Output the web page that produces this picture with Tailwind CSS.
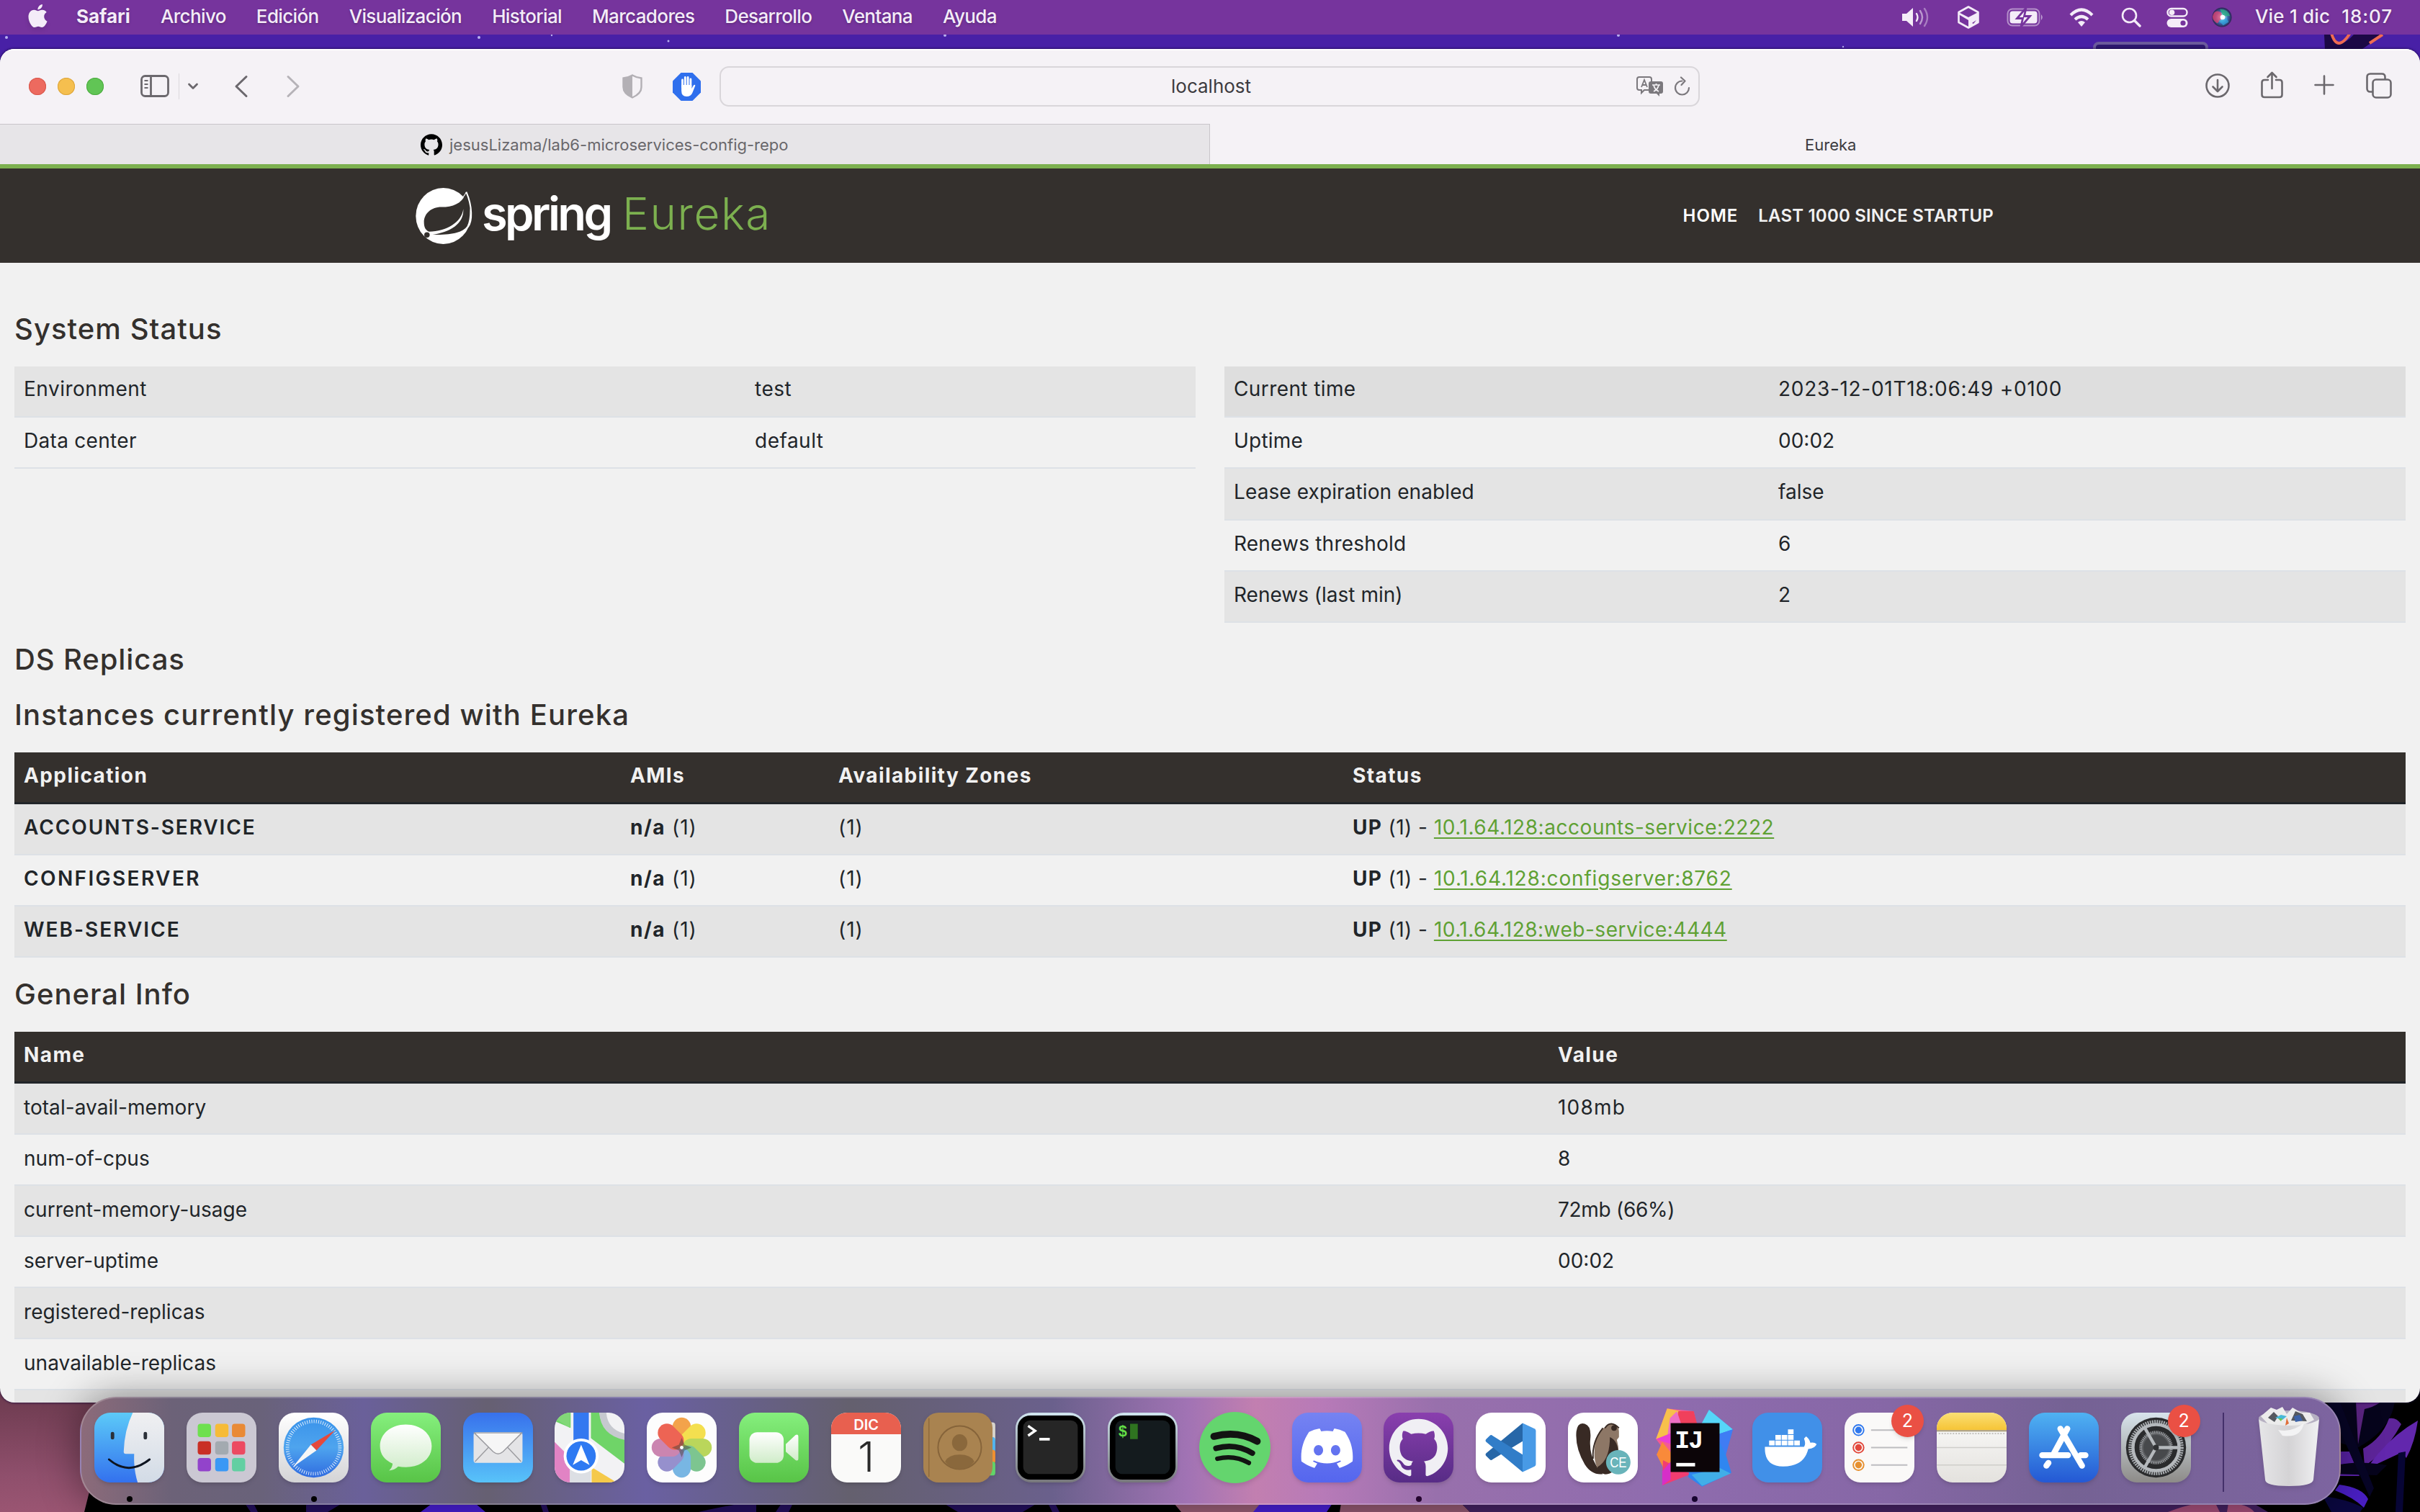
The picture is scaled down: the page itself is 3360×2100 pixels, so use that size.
<!DOCTYPE html>
<html lang="es">
<head>
<meta charset="utf-8">
<title>Eureka</title>
<script src="https://cdn.jsdelivr.net/npm/@tailwindcss/browser@4"></script>
</head>
<body class="relative flex h-[2100px] w-[3360px] flex-col overflow-hidden bg-black font-['Inter',sans-serif] text-[#212529]">

<!-- Wallpaper -->
<svg class="absolute inset-0 -z-0 h-[2100px] w-[3360px]" viewBox="0 0 3360 2100">
  <defs><linearGradient id="pk" x1="0" y1="0" x2="0" y2="1"><stop offset="0" stop-color="#6b3a4e"/><stop offset=".7" stop-color="#8f4f6c"/><stop offset="1" stop-color="#9a5572"/></linearGradient></defs>
  <rect width="3360" height="1000" fill="#4820a6"/>
  <g fill="#b9b0ef"><circle cx="9" cy="52" r="2"/><circle cx="665" cy="52" r="2"/><circle cx="928" cy="57" r="1.5"/><circle cx="1312" cy="49" r="2"/><circle cx="766" cy="49" r="1.2"/><circle cx="2247" cy="49" r="2"/><circle cx="2559" cy="65" r="1.2"/></g>
  <rect x="2908" y="60" width="156" height="40" rx="6" fill="#2d1870" stroke="#6b5a9c" stroke-width="4"/>
  <path d="M3227 48h82l-32 22h-49z" fill="#1c0846"/><path d="M3240 48q6 24 28 0z" fill="#4820a6"/><path d="M3237 46q8 28 26 0M3308 48l-18 12" stroke="#ef6b52" stroke-width="4" fill="none"/>
  <path d="M0 1930H160L122 2080L117 2100H0z" fill="url(#pk)"/>
  <g fill="#241060"><path d="M340 2088h12l6 12h-10zM425 2088h50l-20 12h-30zM970 2100q60-14 80-12v12zM1085 2088h16l-6 12h-18zM1310 2088h130l-20 12h-90zM1455 2088h10l6 12h-10zM750 2088h8l4 12h-8z"/></g>
  <path d="M600 2088h60l14 12h-90z" fill="#4a1fd8"/>
  <path d="M1630 2088h125l-10 12h-105z" fill="#9c5f78"/><path d="M1750 2088h100l-8 12h-102z" fill="#4a1fd8"/><path d="M1862 2088h167l12 12h-181z" fill="#965a74"/><path d="M2029 2088h1100l20 12H2041z" fill="#462264"/><path d="M3010 2100q40-16 66-12l6 12zM3094 2088q26 0 36 12h-38z" fill="#a8507c"/>
  <g>
    <path d="M3240 1945h85q-4 40-52 66l-35-10z" fill="#06041c"/>
    <path d="M3271 1946h36q-10 8-24 11l-9 49z" fill="#5a2480"/>
    <path d="M3281 2012q26-14 36-42q10-2 17 8q-22 40-51 58z" fill="#5d2499"/>
    <path d="M3286 2040q30-44 71-67q-4 30-16 52l-6-8z" fill="#6227ad"/>
    <path d="M3225 2016h37l14 34h-40z" fill="#5a22a8"/>
    <path d="M3240 2037q26-10 74-2l-14 14-60-2z" fill="#06041c"/>
    <path d="M3248 1945l48 122-6 12-60-134z" fill="#070526"/>
    <path d="M3248 2062q32 4 40 20l-6 12q-14-14-40-24z" fill="#4a1fc4"/>
    <path d="M3225 2078q34 4 56 16l-4 6h-40z" fill="#0a0740"/>
    <path d="M3330 2018l10-2-4 84h-10z" fill="#070535"/>
  </g>
</svg>

<!-- Menu bar -->
<header class="relative flex h-12 shrink-0 items-center bg-[#76349d] pr-[38px] pl-[39px] text-[26px] leading-none tracking-[-0.630px] whitespace-nowrap text-[#f4ecf8]">
  <svg class="mt-[-4px] mr-[40px] h-8 w-[27px] drop-shadow-md" viewBox="2 0 20 24" fill="#f4ecf8"><path d="M12.152 6.896c-.948 0-2.415-1.078-3.96-1.04-2.04.027-3.91 1.183-4.961 3.014-2.117 3.675-.546 9.103 1.519 12.09 1.013 1.454 2.208 3.09 3.792 3.039 1.52-.065 2.09-.987 3.935-.987 1.831 0 2.35.987 3.96.948 1.637-.026 2.676-1.48 3.676-2.948 1.156-1.688 1.636-3.325 1.662-3.415-.039-.013-3.182-1.221-3.22-4.857-.026-3.04 2.48-4.494 2.597-4.559-1.429-2.09-3.623-2.324-4.39-2.376-2-.156-3.675 1.09-4.61 1.09zM15.53 3.83c.843-1.012 1.4-2.427 1.245-3.83-1.207.052-2.662.805-3.532 1.818-.78.896-1.454 2.338-1.273 3.714 1.338.104 2.715-.688 3.559-1.701"/></svg>
  <nav class="flex gap-[42px] pb-0.5 font-medium text-shadow-md">
    <span class="font-bold tracking-normal">Safari</span><span>Archivo</span><span>Edición</span><span>Visualización</span><span>Historial</span><span>Marcadores</span><span>Desarrollo</span><span>Ventana</span><span>Ayuda</span>
  </nav>
  <div class="ml-auto flex items-center">
    <svg class="mr-[39px] h-7 w-[38px]" viewBox="0 0 38 28" fill="#f4ecf8"><path d="M0 9h6l9-8v26l-9-8H0z"/><g fill="none" stroke="#f4ecf8" stroke-width="2.4" stroke-linecap="round"><path d="M20 9q3 5 0 10"/><path d="M25 5q6 9 0 18" opacity=".55"/><path d="M31 2q8 12 0 24" opacity=".4"/></g></svg>
    <svg class="mr-[38px] h-8 w-[30px]" viewBox="0 0 30 32"><path d="M15 1.5L28.5 9v14L15 30.500 1.500 23V9z" fill="none" stroke="#f4ecf8" stroke-width="2.600" stroke-linejoin="round"/><path d="M15 16L28.500 9v14L15 30.500zM1.500 9L15 16l0 4L1.500 12z" fill="#f4ecf8"/><path d="M20 24l6-4-4 5z" fill="#76349d"/></svg>
    <svg class="mr-[35px] h-7 w-[52px]" viewBox="0 0 52 28"><rect x="1.500" y="2.500" width="44" height="23" rx="6.500" fill="none" stroke="#f4ecf8" stroke-opacity=".5" stroke-width="2"/><rect x="4.500" y="5.500" width="38" height="17" rx="4" fill="#f4ecf8"/><path d="M48 10q3.500 4 0 8z" fill="#f4ecf8" opacity=".6"/><path d="M27 1L14.500 15.500h8L20 27 32.500 12.500h-8z" fill="#f4ecf8" stroke="#76349d" stroke-width="2.800"/></svg>
    <svg class="mr-[38px] h-7 w-[34px]" viewBox="0 0 34 28"><g fill="none" stroke="#f4ecf8" stroke-width="4.200"><path d="M2 11Q17-4 32 11"/><path d="M8 17q9-8 18 0"/></g><path d="M12 21q5-4 10 0l-5 6z" fill="#f4ecf8"/></svg>
    <svg class="mr-[35px] h-7 w-7" viewBox="0 0 28 28" fill="none" stroke="#f4ecf8" stroke-width="2.600" stroke-linecap="round"><circle cx="11.500" cy="11.500" r="9.500"/><path d="M18.500 18.500L26 26" stroke-width="3.400"/></svg>
    <svg class="mr-8 h-7 w-[30px]" viewBox="0 0 30 28"><rect x="1.500" y="2" width="27" height="10.500" rx="5.200" fill="none" stroke="#f4ecf8" stroke-width="2.400"/><circle cx="7.500" cy="7.200" r="3.800" fill="#f4ecf8"/><rect x=".5" y="16" width="29" height="12" rx="6" fill="#f4ecf8"/><circle cx="23" cy="22" r="3.600" fill="#76349d"/></svg>
    <svg class="mr-[31px] h-7 w-[30px]" viewBox="0 0 30 30"><defs><radialGradient id="siri"><stop offset="0" stop-color="#fff"/><stop offset=".25" stop-color="#9fe3f5"/><stop offset=".6" stop-color="#3c6bb0"/><stop offset="1" stop-color="#2b2450"/></radialGradient></defs><circle cx="15" cy="15" r="14.500" fill="url(#siri)"/><path d="M1 14Q4 2 14 8l2 8-8 8Q1 20 1 14z" fill="#e8406f" opacity=".75"/><path d="M12 3q12 0 15 10l-10 0z" fill="#2fae84" opacity=".8"/><path d="M10 20l12-4 3 6-8 5z" fill="#31a8e0" opacity=".7"/><circle cx="16" cy="15" r="3.500" fill="#fff"/></svg>
    <span class="pb-0.5 font-medium tracking-[0.200px] text-shadow-md">Vie 1 dic</span><span class="ml-[16px] pb-0.5 font-medium tracking-[0.900px] text-shadow-md">18:07</span>
  </div>
</header>

<!-- Safari window -->
<main class="relative mt-5 flex h-[1880px] shrink-0 flex-col overflow-hidden rounded-[20px] bg-[#f1f1f1] shadow-[0_0_3px_1px_rgba(20,5,60,0.6)]">
  <div class="flex h-[104px] shrink-0 items-center border-t-2 border-white bg-[#f5f2f6] pr-[39px] pb-0.5 pl-10 text-[#6b686d]">
    <div class="flex gap-4"><i class="size-6 rounded-full bg-[#ed6a5f] ring-1 ring-[#d8584d] ring-inset"></i><i class="size-6 rounded-full bg-[#f5bf4f] ring-1 ring-[#dca53c] ring-inset"></i><i class="size-6 rounded-full bg-[#61c555] ring-1 ring-[#4dab41] ring-inset"></i></div>
    <svg class="ml-[51px] h-8 w-10" viewBox="0 0 40 32" fill="none" stroke="currentColor" stroke-width="2.800"><rect x="1.500" y="1.500" width="37" height="28" rx="5"/><path d="M14.500 1.500v28"/><path d="M5.500 8h5M5.500 13h5M5.500 18h5" stroke-width="2.200"/></svg>
    <i class="ml-[13px] h-9 w-px bg-[#dcd9dd]"></i>
    <svg class="ml-[11px] h-3 w-4" viewBox="0 0 16 12" fill="none" stroke="currentColor" stroke-width="2.800" stroke-linecap="round" stroke-linejoin="round"><path d="M2.500 3L8 8.500 13.500 3"/></svg>
    <svg class="ml-[49px] h-8 w-5" viewBox="0 0 20 32" fill="none" stroke="currentColor" stroke-width="3" stroke-linecap="round" stroke-linejoin="round"><path d="M17 2.500L3 16l14 13.500"/></svg>
    <svg class="ml-[52px] h-8 w-5" viewBox="0 0 20 32" fill="none" stroke="#b6b3b8" stroke-width="3" stroke-linecap="round" stroke-linejoin="round"><path d="M3 2.500L17 16 3 29.500"/></svg>
    <svg class="ml-[447px] h-[34px] w-7" viewBox="0 0 28 34"><path d="M14 1.500Q20 5 26.500 5.500V18q0 9-12.500 14.500Q1.500 27 1.500 18V5.500Q8 5 14 1.500z" fill="none" stroke="#b3b0b5" stroke-width="2.400"/><path d="M14 2v30Q1.500 27 1.500 18V5.500Q8 5 14 2z" fill="#b3b0b5"/></svg>
    <svg class="ml-[42px] size-[39px]" viewBox="0 0 39 39"><path d="M11.500 0h16L39 11.500v16L27.500 39h-16L0 27.500v-16z" fill="#2f6fed"/><g stroke="#fff" stroke-width="2.800" stroke-linecap="round"><path d="M13.500 20V10M17.300 18V6.500M21.100 18V6.500M24.900 20V9"/></g><path d="M12.100 17h14.200v5l3-5q2-1 2 1l-4 10q-2 5-8 5-7.200 0-7.200-8z" fill="#fff"/></svg>
    <div class="ml-[26px] flex h-14 w-[1361px] items-center rounded-[13px] border-2 border-[#d9d6da] pr-[11px] text-[#7b787d]">
      <span class="mr-auto ml-[625px] text-[26px] leading-none text-[#3d3b3f]">localhost</span>
      <svg class="mr-[13px] h-7 w-[38px]" viewBox="0 0 38 28"><path d="M4 1h14q3 0 3 3v12q0 3-3 3h-7l-4 4v-4H4q-3 0-3-3V4q0-3 3-3z" fill="none" stroke="currentColor" stroke-width="2"/><path d="M7 15l4-10 4 10M8.500 12h5" fill="none" stroke="currentColor" stroke-width="1.800"/><path d="M20 7h14q3 0 3 3v11q0 3-3 3h-2v4l-4-4h-8q-3 0-3-3V10q0-3 3-3z" fill="currentColor"/><path d="M22 12h11M27.500 10v2M24 21q6-3 7-9M24 12q1 6 7 9" fill="none" stroke="#f5f2f6" stroke-width="1.700"/></svg>
      <svg class="h-7 w-6" viewBox="0 0 24 28" fill="none" stroke="currentColor" stroke-width="2.200" stroke-linecap="round" stroke-linejoin="round"><path d="M12.500 6.500A9.500 9.500 0 1 0 22 16"/><path d="M11 1.500l5.500 5-5 5.500"/></svg>
    </div>
    <svg class="mr-[43px] mb-0.5 ml-auto size-[34px]" viewBox="0 0 34 34" fill="none" stroke="currentColor" stroke-width="2.600" stroke-linecap="round" stroke-linejoin="round"><circle cx="17" cy="17" r="15.500"/><path d="M17 9v16M10.500 18.500L17 25l6.500-6.500"/></svg>
    <svg class="mr-[43px] mb-[5px] h-[38px] w-[31px]" viewBox="0 0 31 38" fill="none" stroke="currentColor" stroke-width="2.600" stroke-linecap="round" stroke-linejoin="round"><path d="M10 12H5q-3.500 0-3.500 3.500v17Q1.500 36 5 36h21q3.500 0 3.500-3.500v-17Q29.500 12 26 12h-5M15.500 24V2M9.500 8l6-6 6 6"/></svg>
    <svg class="mr-[44px] mb-1 size-[28px]" viewBox="0 0 28 28" fill="none" stroke="currentColor" stroke-width="2.600" stroke-linecap="round"><path d="M14 1.500v25M1.500 14h25"/></svg>
    <svg class="mb-0.5 size-[36px]" viewBox="0 0 36 36" fill="none" stroke="currentColor" stroke-width="2.600"><path d="M9 26.500H6Q1.500 26.500 1.500 22V6Q1.500 1.500 6 1.500h16Q26.500 1.500 26.500 6v3"/><rect x="9.500" y="9.500" width="25" height="25" rx="4.500"/></svg>
  </div>
  <div class="grid h-14 shrink-0 grid-cols-2 text-[22px]">
    <div class="flex items-center gap-[10px] border-t border-r border-[#c9c6ca] bg-[#e7e5e8] pl-[584px] text-[#69676b]">
      <svg class="size-[30px]" viewBox="0 0 24 24" fill="#000"><path d="M12 .297c-6.630 0-12 5.373-12 12 0 5.303 3.438 9.800 8.205 11.385.6.113.82-.258.82-.577 0-.285-.01-1.040-.015-2.040-3.338.724-4.042-1.610-4.042-1.610C4.422 18.070 3.633 17.700 3.633 17.700c-1.087-.744.084-.729.084-.729 1.205.084 1.838 1.236 1.838 1.236 1.070 1.835 2.809 1.305 3.495.998.108-.776.417-1.305.76-1.605-2.665-.3-5.466-1.332-5.466-5.930 0-1.310.465-2.380 1.235-3.220-.135-.303-.54-1.523.105-3.176 0 0 1.005-.322 3.300 1.230.96-.267 1.980-.399 3-.405 1.020.006 2.040.138 3 .405 2.280-1.552 3.285-1.230 3.285-1.230.645 1.653.24 2.873.12 3.176.765.840 1.230 1.910 1.230 3.220 0 4.610-2.805 5.625-5.475 5.920.42.36.81 1.096.81 2.220 0 1.606-.015 2.896-.015 3.286 0 .315.21.69.825.57C20.565 22.092 24 17.592 24 12.297c0-6.627-5.373-12-12-12"/></svg>
      <span class="pt-px">jesusLizama/lab6-microservices-config-repo</span>
    </div>
    <div class="flex items-center bg-[#f5f2f6] pt-0.5 pl-[826px] text-[#3d3b3f]">Eureka</div>
  </div>

  <!-- Eureka page -->
  <div class="flex h-[137px] shrink-0 items-center border-t-[6px] border-[#7cb04f] bg-[#34302d] pl-[577px]">
    <svg class="h-[80px] w-[79px]" viewBox="50 60 230 238" preserveAspectRatio="none"><ellipse cx="162" cy="179" rx="111" ry="116" fill="#fff"/><path d="M252 88C236 128 200 142 155 142 110 142 84 172 84 205 84 228 92 238 104 244L120 256C200 258 240 246 258 222 275 190 271 130 262 84z" fill="#34302d"/><path d="M255 80C280 140 280 200 262 224" fill="none" stroke="#fff" stroke-width="6"/><path d="M255 80q-6 14-18 26" stroke="#fff" stroke-width="3" fill="none"/><path d="M243 150C236 205 176 242 104 244l10 13C190 246 246 212 243 150z" fill="#fff"/><circle cx="96" cy="257" r="11" fill="#34302d"/></svg>
    <span class="ml-[13px] w-[195px] pb-1.5 text-[65px] leading-none font-semibold tracking-[-3.600px] whitespace-nowrap text-white">spring</span>
    <span class="pb-1.5 text-[62px] leading-none font-[350] tracking-[1.600px] text-[#7cb04f]">Eureka</span>
    <nav class="ml-auto flex gap-[28px] pr-[592px] text-[24px] leading-none font-semibold text-white"><span class="tracking-[0.900px]">HOME</span><span class="tracking-[0.200px] text-[#f1f1f1]">LAST 1000 SINCE STARTUP</span></nav>
  </div>

  <div class="flex flex-col px-5 text-[28px] leading-[42px] tracking-[0.2px] whitespace-nowrap">
    <h1 class="mt-[68px] h-12 text-[40px] leading-[48px] font-medium tracking-[1.050px] text-[#34302d]">System Status</h1>
    <div class="mt-7 flex items-start gap-10">
      <div class="flex-1">
        <div class="grid h-[71.200px] grid-cols-[1015px_1fr] border-b-2 border-[#dde1e6] bg-[#e4e4e4] px-[13px] pt-[10px] tracking-[0.500px]"><span>Environment</span><span>test</span></div>
        <div class="grid h-[71.200px] grid-cols-[1015px_1fr] border-b-2 border-[#dde1e6] px-[13px] pt-[11px] tracking-[0.300px]"><span>Data center</span><span class="tracking-[0.500px]">default</span></div>
      </div>
      <div class="flex-1">
        <div class="grid h-[71.200px] grid-cols-[756px_1fr] border-b-2 border-[#dde1e6] bg-[#dedede] px-[13px] pt-[10px]"><span class="tracking-[0.400px]">Current time</span><span class="tracking-[0.700px]">2023-12-01T18:06:49 +0100</span></div>
        <div class="grid h-[71.200px] grid-cols-[756px_1fr] border-b-2 border-[#dde1e6] px-[13px] pt-[11px]"><span>Uptime</span><span class="tracking-[0px]">00:02</span></div>
        <div class="grid h-[71.200px] grid-cols-[756px_1fr] border-b-2 border-[#dde1e6] bg-[#e4e4e4] px-[13px] pt-[11px]"><span class="tracking-[0.100px]">Lease expiration enabled</span><span class="tracking-[0px]">false</span></div>
        <div class="grid h-[71.200px] grid-cols-[756px_1fr] border-b-2 border-[#dde1e6] px-[13px] pt-[11px]"><span>Renews threshold</span><span>6</span></div>
        <div class="grid h-[71.200px] grid-cols-[756px_1fr] border-b-2 border-[#dde1e6] bg-[#e4e4e4] px-[13px] pt-[11px]"><span class="tracking-[0px]">Renews (last min)</span><span>2</span></div>
      </div>
    </div>
    <h1 class="mt-[27px] h-12 text-[40px] leading-[48px] font-medium tracking-[0.900px] text-[#34302d]">DS Replicas</h1>
    <h1 class="mt-[29px] h-12 text-[40px] leading-[48px] font-medium tracking-[1.120px] text-[#34302d]">Instances currently registered with Eureka</h1>

    <div class="mt-7">
      <div class="grid h-[72px] grid-cols-[842px_289px_714px_1fr] border-b-[3px] border-[#212529] bg-[#34302d] px-[13px] pt-[11px] font-bold tracking-[1.400px] text-[#f1f1f1]"><span>Application</span><span>AMIs</span><span>Availability Zones</span><span>Status</span></div>
      <div class="grid h-[71px] grid-cols-[842px_289px_714px_1fr] border-b-2 border-[#dde1e6] bg-[#e4e4e4] px-[13px] pt-[11px]"><b class="font-semibold tracking-[1.900px]">ACCOUNTS-SERVICE</b><span class="tracking-[1px]"><b class="tracking-[1.500px]">n/a</b> (1)</span><span class="tracking-[1px]">(1)</span><span><b class="tracking-[1.200px]">UP</b><span class="tracking-[0.500px]"> (1) - </span><a class="tracking-[0.550px] text-[#5fa134] underline decoration-2 underline-offset-4">10.1.64.128:accounts-service:2222</a></span></div>
      <div class="grid h-[71px] grid-cols-[842px_289px_714px_1fr] border-b-2 border-[#dde1e6] px-[13px] pt-[11px]"><b class="font-semibold tracking-[2.400px]">CONFIGSERVER</b><span class="tracking-[1px]"><b class="tracking-[1.500px]">n/a</b> (1)</span><span class="tracking-[1px]">(1)</span><span><b class="tracking-[1.200px]">UP</b><span class="tracking-[0.500px]"> (1) - </span><a class="tracking-[0.830px] text-[#5fa134] underline decoration-2 underline-offset-4">10.1.64.128:configserver:8762</a></span></div>
      <div class="grid h-[71px] grid-cols-[842px_289px_714px_1fr] border-b-2 border-[#dde1e6] bg-[#e4e4e4] px-[13px] pt-[11px]"><b class="font-semibold tracking-[2px]">WEB-SERVICE</b><span class="tracking-[1px]"><b class="tracking-[1.500px]">n/a</b> (1)</span><span class="tracking-[1px]">(1)</span><span><b class="tracking-[1.200px]">UP</b><span class="tracking-[0.500px]"> (1) - </span><a class="tracking-[0.500px] text-[#5fa134] underline decoration-2 underline-offset-4">10.1.64.128:web-service:4444</a></span></div>
    </div>

    <h1 class="mt-[27px] h-12 text-[40px] leading-[48px] font-medium tracking-[1px] text-[#34302d]">General Info</h1>
    <div class="mt-7 tracking-[0.050px]">
      <div class="grid h-[72px] grid-cols-[2130px_1fr] border-b-[3px] border-[#212529] bg-[#34302d] px-[13px] pt-[11px] font-bold tracking-[1.400px] text-[#f1f1f1]"><span>Name</span><span>Value</span></div>
      <div class="grid h-[71px] grid-cols-[2130px_1fr] border-b-2 border-[#dde1e6] bg-[#e4e4e4] px-[13px] pt-[12px]"><span>total-avail-memory</span><span class="tracking-[1.200px]">108mb</span></div>
      <div class="grid h-[71px] grid-cols-[2130px_1fr] border-b-2 border-[#dde1e6] px-[13px] pt-[12px]"><span>num-of-cpus</span><span>8</span></div>
      <div class="grid h-[71px] grid-cols-[2130px_1fr] border-b-2 border-[#dde1e6] bg-[#e4e4e4] px-[13px] pt-[12px]"><span>current-memory-usage</span><span class="tracking-[-0.300px]">72mb (66%)</span></div>
      <div class="grid h-[71px] grid-cols-[2130px_1fr] border-b-2 border-[#dde1e6] px-[13px] pt-[12px]"><span>server-uptime</span><span class="tracking-[0px]">00:02</span></div>
      <div class="grid h-[71px] grid-cols-[2130px_1fr] border-b-2 border-[#dde1e6] bg-[#e4e4e4] px-[13px] pt-[12px]"><span>registered-replicas</span></div>
      <div class="grid h-[71px] grid-cols-[2130px_1fr] border-b-2 border-[#dde1e6] px-[13px] pt-[12px]"><span>unavailable-replicas</span></div>
      <div class="h-[71px] bg-[#e4e4e4]"></div>
    </div>
  </div>
</main>

<!-- Dock -->
<footer class="absolute top-[1940px] left-[111px] flex h-[150px] w-[3139px] gap-[30.900px] rounded-[50px] border-2 border-white/20 bg-[linear-gradient(90deg,#8c6b7a_0%,#6c6278_4%,#69627a_8%,#6a609a_12.500%,#666072_18%,#6a60a2_25%,#64606e_34%,#6a608c_43%,#a173b4_49%,#c27fb0_52%,#b77ab8_55%,#9870ac_60%,#8f6cae_70%,#8667a6_80%,#756294_88%,#7d64a0_100%)] pt-[20px] pl-[18px] shadow-[0_0_56px_rgba(0,0,0,0.42)]">
  <!-- Finder -->
  <div class="relative size-[97px] shrink-0"><svg class="size-[97px] rounded-[22px] shadow-md" viewBox="0 0 100 100"><defs><linearGradient id="f1" x2="0" y2="1"><stop stop-color="#5ccaf8"/><stop offset="1" stop-color="#3371ee"/></linearGradient><linearGradient id="f2" x2="0" y2="1"><stop stop-color="#f0f0f2"/><stop offset="1" stop-color="#d2dbe6"/></linearGradient></defs><path fill="url(#f1)" d="M0 0h100v100H0z"/><path d="M55 0Q43 25 42 56q0 3 3 3h12q-1 22 5 41h38V0z" fill="url(#f2)"/><path d="M26 30v6M73 30v6" stroke="#2b3038" stroke-width="5" stroke-linecap="round"/><path d="M21 67q28 24 58 0" fill="none" stroke="#0d1420" stroke-width="3" stroke-linecap="round"/></svg><i class="absolute top-[116px] left-[45px] size-2 rounded-full bg-black"></i></div>
  <!-- Launchpad -->
  <svg class="size-[97px] shrink-0 rounded-[22px] shadow-md" viewBox="0 0 100 100"><path fill="#cbc8d3" d="M0 0h100v100H0z"/><rect x="16" y="16" width="19" height="19" rx="4" fill="#6ee04f"/><rect x="41" y="16" width="19" height="19" rx="4" fill="#f6bb38"/><rect x="65" y="16" width="19" height="19" rx="4" fill="#e98a36"/><rect x="16" y="41" width="19" height="19" rx="4" fill="#c92f25"/><rect x="41" y="41" width="19" height="19" rx="4" fill="#a3aab0"/><rect x="65" y="41" width="19" height="19" rx="4" fill="#ec4a61"/><rect x="16" y="65" width="19" height="19" rx="4" fill="#9243cb"/><rect x="41" y="65" width="19" height="19" rx="4" fill="#3a98f5"/><rect x="65" y="65" width="19" height="19" rx="4" fill="#62cfa2"/></svg>
  <!-- Safari -->
  <div class="relative size-[97px] shrink-0"><svg class="size-[97px] rounded-[22px] shadow-md" viewBox="0 0 100 100"><defs><linearGradient id="s1" x2="0" y2="1"><stop stop-color="#fff"/><stop offset="1" stop-color="#d4d4d6"/></linearGradient><linearGradient id="s2" x2="0" y2="1"><stop stop-color="#3a93ea"/><stop offset=".5" stop-color="#4ea4ee"/><stop offset="1" stop-color="#2f6be0"/></linearGradient></defs><path fill="url(#s1)" d="M0 0h100v100H0z"/><circle cx="50" cy="50" r="43" fill="url(#s2)"/><circle cx="50" cy="50" r="37.500" fill="none" stroke="#fff" stroke-width="5" stroke-dasharray="1 2.270" opacity=".85"/><path d="M81 25L54 54l-8-8z" fill="#e5493c"/><path d="M20 78l26-32 8 8z" fill="#f6f6f6"/></svg><i class="absolute top-[116px] left-[45px] size-2 rounded-full bg-black"></i></div>
  <!-- Messages -->
  <svg class="size-[97px] shrink-0 rounded-[22px] shadow-md" viewBox="0 0 100 100"><defs><linearGradient id="g1" x2="0" y2="1"><stop stop-color="#85ef7d"/><stop offset="1" stop-color="#58c447"/></linearGradient><linearGradient id="g2" x2="0" y2="1"><stop stop-color="#fff"/><stop offset="1" stop-color="#d0ecc9"/></linearGradient></defs><path fill="url(#g1)" d="M0 0h100v100H0z"/><path d="M50 17c21 0 37 13 37 31S71 78 50 78q-6 0-11-1-5 5-13 6 5-5 5-10Q13 65 13 48c0-18 16-31 37-31z" fill="url(#g2)"/></svg>
  <!-- Mail -->
  <svg class="size-[97px] shrink-0 rounded-[22px] shadow-md" viewBox="0 0 100 100"><defs><linearGradient id="m1" x2="0" y2="1"><stop stop-color="#3871ec"/><stop offset="1" stop-color="#58c3f9"/></linearGradient></defs><path fill="url(#m1)" d="M0 0h100v100H0z"/><rect x="15" y="28" width="70" height="44" rx="4" fill="#e4e4e6"/><path d="M17 70l22-23M83 70L61 47" stroke="#9c9ca0" stroke-width="1.500"/><path d="M16 29l27 27q7 6 14 0l27-27z" fill="#f6f6f6" stroke="#9c9ca0" stroke-width="1.500"/></svg>
  <!-- Maps -->
  <svg class="size-[97px] shrink-0 rounded-[22px] shadow-md" viewBox="0 0 100 100"><path fill="#f2f2f4" d="M0 0h100v100H0z"/><path d="M0 12V0h23v22zM50 0h14q4 32 36 38v35L50 35z" fill="#6fd468"/><path d="M0 0h22v22L0 8z" fill="#82d878"/><path d="M64 0h10q2 24 26 30v9Q66 32 64 0z" fill="#c6c9cf"/><path d="M0 42l22 22v36H0z" fill="#e183c4"/><path d="M24 0h28v100H24z" fill="#f2f2f4"/><path d="M27 0h22v42H27z" fill="#3478f0"/><path d="M22 68h30v32H22z" fill="#dcdfe4"/><path d="M53 78l36 22H53z" fill="#f5c94a"/><circle cx="38" cy="62" r="25" fill="#fff"/><circle cx="38" cy="62" r="21" fill="#2f7af2"/><path d="M38 46l12 29-12-7-12 7z" fill="#fff"/></svg>
  <!-- Photos -->
  <svg class="size-[97px] shrink-0 rounded-[22px] shadow-md" viewBox="0 0 100 100"><path fill="#fdfdfd" d="M0 0h100v100H0z"/><g opacity=".9"><rect x="37" y="7" width="26" height="42" rx="13" fill="#f29a38"/><rect x="37" y="7" width="26" height="42" rx="13" fill="#f3dc3c" transform="rotate(45 50 50)"/><rect x="37" y="7" width="26" height="42" rx="13" fill="#b3d24a" transform="rotate(90 50 50)"/><rect x="37" y="7" width="26" height="42" rx="13" fill="#6fbf84" transform="rotate(135 50 50)"/><rect x="37" y="7" width="26" height="42" rx="13" fill="#6aaee0" transform="rotate(180 50 50)"/><rect x="37" y="7" width="26" height="42" rx="13" fill="#8b84c8" transform="rotate(225 50 50)"/><rect x="37" y="7" width="26" height="42" rx="13" fill="#c678a8" transform="rotate(270 50 50)"/><rect x="37" y="7" width="26" height="42" rx="13" fill="#ec5442" transform="rotate(315 50 50)"/></g><path d="M50 36l4 10 10 4-10 4-4 10-4-10-10-4 10-4z" fill="#4c4438" opacity=".5"/><circle cx="50" cy="50" r="2.500" fill="#fff"/></svg>
  <!-- FaceTime -->
  <svg class="size-[97px] shrink-0 rounded-[22px] shadow-md" viewBox="0 0 100 100"><path fill="url(#g1)" d="M0 0h100v100H0z"/><rect x="15" y="28" width="49" height="44" rx="11" fill="url(#g2)"/><path d="M67 45l14-13q4-2 4 2v32q0 4-4 2L67 56z" fill="url(#g2)"/></svg>
  <!-- Calendar -->
  <div class="flex size-[97px] shrink-0 flex-col items-center rounded-[22px] bg-[#fafaf9] shadow-md"><div class="w-full rounded-t-[22px] bg-[#e8604f] pt-1 text-center text-[20px] leading-[26px] font-semibold text-white">DIC</div><div class="text-[58px] leading-[62px] font-light text-[#2a2a2a]">1</div></div>
  <!-- Contacts -->
  <svg class="size-[97px] shrink-0 overflow-visible drop-shadow-md" viewBox="0 0 100 100"><rect x="84" y="14" width="19" height="28" rx="4" fill="#d8d4cc"/><rect x="84" y="35" width="19" height="22" rx="4" fill="#52b4ee"/><rect x="84" y="53" width="19" height="20" rx="4" fill="#f09030"/><rect x="84" y="70" width="19" height="20" rx="4" fill="#62d468"/><rect width="99" height="100" rx="22" fill="#a98350"/><path d="M8 8v84" stroke="#8e6a3c" stroke-width="1.500"/><circle cx="52" cy="50" r="31" fill="none" stroke="#86643a" stroke-width="2"/><ellipse cx="52" cy="43" rx="11" ry="12" fill="#8a683c"/><path d="M31 70q5-10 21-10t21 10q-8 11-21 11T31 70z" fill="#8a683c"/></svg>
  <!-- Terminal -->
  <svg class="size-[97px] shrink-0 rounded-[22px] shadow-md" viewBox="0 0 100 100"><defs><linearGradient id="t1" x2="0" y2="1"><stop stop-color="#cfe4ee"/><stop offset="1" stop-color="#77777b"/></linearGradient></defs><path fill="url(#t1)" d="M0 0h100v100H0z"/><rect x="3" y="4" width="94" height="92" rx="18" fill="#000"/><rect x="11" y="11" width="78" height="77" rx="10" fill="#262626"/><path d="M18 19l10 7-10 7" fill="none" stroke="#fff" stroke-width="3.500"/><path d="M34 38h15" stroke="#fff" stroke-width="4"/></svg>
  <!-- iTerm -->
  <svg class="size-[97px] shrink-0 rounded-[22px] shadow-md" viewBox="0 0 100 100"><path fill="url(#t1)" d="M0 0h100v100H0z"/><rect x="3" y="4" width="94" height="92" rx="18" fill="#000"/><rect x="11" y="11" width="78" height="77" rx="10" fill="#141b1e"/><text x="15" y="34" font-family="Liberation Mono, monospace" font-weight="bold" font-size="22" fill="#62dd46">$</text><path d="M32 16h11v22H32z" fill="#2f7420"/></svg>
  <!-- Spotify -->
  <svg class="size-[97px] shrink-0 overflow-visible drop-shadow-md" viewBox="0 0 100 100"><circle cx="50" cy="50" r="51" fill="#64d56e"/><g fill="none" stroke="#121412" stroke-linecap="round"><path d="M20 34q34-9 62 7" stroke-width="10"/><path d="M23 51q28-8 52 7" stroke-width="8"/><path d="M25 66q24-6 45 6" stroke-width="6.500"/></g></svg>
  <!-- Discord -->
  <svg class="size-[97px] shrink-0 rounded-[22px] shadow-md" viewBox="0 0 100 100"><defs><linearGradient id="d1" x2="0" y2="1"><stop stop-color="#7583f2"/><stop offset="1" stop-color="#5566ee"/></linearGradient></defs><path fill="url(#d1)" d="M0 0h100v100H0z"/><path transform="translate(13 14) scale(3.080)" fill="#fff" d="M20.317 4.3698a19.7913 19.7913 0 00-4.8851-1.5152.0741.0741 0 00-.0785.0371c-.211.3753-.4447.8648-.6083 1.2495-1.8447-.2762-3.68-.2762-5.4868 0-.1636-.3933-.4058-.8742-.6177-1.2495a.077.077 0 00-.0785-.037 19.7363 19.7363 0 00-4.8852 1.515.0699.0699 0 00-.0321.0277C.5334 9.0458-.319 13.5799.0992 18.0578a.0824.0824 0 00.0312.0561c2.0528 1.5076 4.0413 2.4228 5.9929 3.0294a.0777.0777 0 00.0842-.0276c.4616-.6304.8731-1.2952 1.226-1.9942a.076.076 0 00-.0416-.1057c-.6528-.2476-1.2743-.5495-1.8722-.8923a.077.077 0 01-.0076-.1277c.1258-.0943.2517-.1923.3718-.2914a.0743.0743 0 01.0776-.0105c3.9278 1.7933 8.18 1.7933 12.0614 0a.0739.0739 0 01.0785.0095c.1202.099.246.1981.3728.2924a.077.077 0 01-.0066.1276 12.2986 12.2986 0 01-1.873.8914.0766.0766 0 00-.0407.1067c.3604.698.7719 1.3628 1.225 1.9932a.076.076 0 00.0842.0286c1.961-.6067 3.9495-1.5219 6.0023-3.0294a.077.077 0 00.0313-.0552c.5004-5.177-.8382-9.6739-3.5485-13.6604a.061.061 0 00-.0312-.0286zM8.02 15.3312c-1.1825 0-2.1569-1.0857-2.1569-2.419 0-1.3332.9555-2.4189 2.157-2.4189 1.2108 0 2.1757 1.0952 2.1568 2.419 0 1.3332-.9555 2.4189-2.1569 2.4189zm7.9748 0c-1.1825 0-2.1569-1.0857-2.1569-2.419 0-1.3332.9554-2.4189 2.1569-2.4189 1.2108 0 2.1757 1.0952 2.1568 2.419 0 1.3332-.946 2.4189-2.1568 2.4189Z"/></svg>
  <!-- GitHub -->
  <div class="relative size-[97px] shrink-0"><svg class="size-[97px] rounded-[22px] shadow-md" viewBox="0 0 100 100"><defs><linearGradient id="h1" x2="0" y2="1"><stop stop-color="#8a3fae"/><stop offset="1" stop-color="#572c86"/></linearGradient></defs><path fill="url(#h1)" d="M0 0h100v100H0z"/><path transform="translate(8 8) scale(3.500)" fill="#f0eff4" d="M12 .297c-6.630 0-12 5.373-12 12 0 5.303 3.438 9.800 8.205 11.385.6.113.82-.258.82-.577 0-.285-.01-1.040-.015-2.040-3.338.724-4.042-1.610-4.042-1.610C4.422 18.070 3.633 17.700 3.633 17.700c-1.087-.744.084-.729.084-.729 1.205.084 1.838 1.236 1.838 1.236 1.070 1.835 2.809 1.305 3.495.998.108-.776.417-1.305.76-1.605-2.665-.3-5.466-1.332-5.466-5.930 0-1.310.465-2.380 1.235-3.220-.135-.303-.54-1.523.105-3.176 0 0 1.005-.322 3.300 1.230.96-.267 1.980-.399 3-.405 1.020.006 2.040.138 3 .405 2.280-1.552 3.285-1.230 3.285-1.230.645 1.653.24 2.873.12 3.176.765.840 1.230 1.910 1.230 3.220 0 4.610-2.805 5.625-5.475 5.920.42.36.81 1.096.81 2.220 0 1.606-.015 2.896-.015 3.286 0 .315.21.69.825.57C20.565 22.092 24 17.592 24 12.297c0-6.627-5.373-12-12-12"/></svg><i class="absolute top-[116px] left-[45px] size-2 rounded-full bg-[#24042e]"></i></div>
  <!-- VS Code -->
  <svg class="size-[97px] shrink-0 rounded-[22px] shadow-md" viewBox="0 0 100 100"><path fill="#fff" d="M0 0h100v100H0z"/><path d="M67 15v26L24 67q-2 2-4 0l-5-5q-2-2 0-4z" fill="#2767a8"/><path d="M67 85V60L24 33q-2-2-4 0l-5 5q-2 2 0 4z" fill="#317dc8"/><path d="M67 15l17 8q2 1 2 3v48q0 2-2 3l-17 8z" fill="#489ae6"/></svg>
  <!-- DBeaver -->
  <svg class="size-[97px] shrink-0 rounded-[22px] shadow-md" viewBox="0 0 100 100"><path fill="#fff" d="M0 0h100v100H0z"/><path d="M12 27Q14 13 24 16q10 3 8 22-2 22 10 40l8 10q-16 2-26-14Q10 50 12 27z" fill="#382a24"/><path d="M54 20q6-8 13-2 6 2 6 9v8l-3 4q4 14 2 30-4 20-20 19-12-4-14-24-2-34 16-44z" fill="#8d7766"/><path d="M60 35q14 6 12 32-4 22-20 21-10-3-10-10 18-10 18-43z" fill="#382a24"/><path d="M53 22q8-12 20 0M50 22q-16 20-14 44" fill="none" stroke="#382a24" stroke-width="2"/><circle cx="66" cy="22" r="4" fill="#382a24"/><circle cx="72" cy="71" r="17.500" fill="#69b4ba"/><text x="72" y="78" text-anchor="middle" font-family="Liberation Sans, sans-serif" font-size="20" textLength="24" lengthAdjust="spacingAndGlyphs" fill="#fff">CE</text></svg>
  <!-- IntelliJ IDEA -->
  <div class="relative size-[97px] shrink-0"><svg class="size-[97px] overflow-visible" viewBox="0 0 100 100"><path d="M10-6L48-2 60 50 14 64-6 38z" fill="#f45a94"/><path d="M10-6l20 4-14 34-22 6z" fill="#f7c04c"/><path d="M26-2l22 0 8 30-34-8z" fill="#f0405c"/><path d="M14 8L24-2 30 16 10 36z" fill="#ee6fc4"/><path d="M-6 38l30-12v22z" fill="#ea3fd6"/><path d="M-5 60l8-18 20 24-18 14z" fill="#f98a3a"/><path d="M3 104l1-36 40 20z" fill="#f23d70"/><path d="M3 104l0-20 12-14 0 26z" fill="#d62fc8"/><path d="M70-4l34 28-10 36 8 26-42 20-20-14 16-60z" fill="#2f86f0"/><path d="M70-4l34 28-24 8-22-14z" fill="#56d6f8"/><path d="M80 32l24-8-10 36z" fill="#3f7cf4"/><path d="M60 105l41-18-16-8-40 10z" fill="#41aee8"/><rect x="15" y="15" width="70" height="70" fill="#0c0508"/><g fill="#fff"><text x="21" y="50" font-family="Liberation Mono, monospace" font-weight="bold" font-size="36" textLength="41">IJ</text><path d="M23 72h27v5H23z"/></g></svg><i class="absolute top-[116px] left-[44px] size-2 rounded-full bg-[#180530]"></i></div>
  <!-- Docker -->
  <svg class="size-[97px] shrink-0 rounded-[22px] shadow-md" viewBox="0 0 100 100"><path fill="#4190e8" d="M0 0h100v100H0z"/><g fill="#fff"><path d="M18 49h56q3-4 0-12l3-3q5 4 6 9 6-1 9 2-2 6-12 7Q74 77 44 77 17 77 18 49z"/><path d="M24 40h8v7h-8zM33 40h8v7h-8zM42 40h8v7h-8zM51 40h8v7h-8zM60 40h8v7h-8zM33 32h8v7h-8zM42 32h8v7h-8zM51 32h8v7h-8zM51 24h8v7h-8z"/></g></svg>
  <!-- Reminders -->
  <div class="relative size-[97px] shrink-0"><svg class="size-[97px] rounded-[22px] shadow-md" viewBox="0 0 100 100"><path fill="#faf9f8" d="M0 0h100v100H0z"/><path d="M38 25h52M38 50h52M38 75h52" stroke="#bdbdc0" stroke-width="2"/><g fill="none" stroke-width="2"><circle cx="20" cy="25" r="7.500" stroke="#2f78ee"/><circle cx="20" cy="50" r="7.500" stroke="#e2483c"/><circle cx="20" cy="75" r="7.500" stroke="#e6902f"/></g><circle cx="20" cy="25" r="4.800" fill="#2f78ee"/><circle cx="20" cy="50" r="4.800" fill="#e2483c"/><circle cx="20" cy="75" r="4.800" fill="#e6902f"/></svg><span class="absolute -top-[11px] left-[65px] flex size-[45px] items-center justify-center rounded-full bg-[#ea5044] text-[25px] leading-none text-white shadow-md">2</span></div>
  <!-- Notes -->
  <svg class="size-[97px] shrink-0 rounded-[22px] shadow-md" viewBox="0 0 100 100"><defs><linearGradient id="n1" x2="0" y2="1"><stop stop-color="#fadf74"/><stop offset="1" stop-color="#f6c436"/></linearGradient><linearGradient id="n2" x2="0" y2="1"><stop stop-color="#fbfbfa"/><stop offset="1" stop-color="#e4e2de"/></linearGradient></defs><path fill="url(#n2)" d="M0 0h100v100H0z"/><path fill="url(#n1)" d="M0 0h100v25H0z"/><path d="M0 26h100" stroke="#a89a78" stroke-width="2"/><path d="M3 30h96" stroke="#bcbab6" stroke-width="2" stroke-dasharray="2 2"/><path d="M0 50h100M0 75h100" stroke="#cfcdca" stroke-width="1.500"/></svg>
  <!-- App Store -->
  <svg class="size-[97px] shrink-0 rounded-[22px] shadow-md" viewBox="0 0 100 100"><defs><linearGradient id="a1" x2="0" y2="1"><stop stop-color="#4fb2f2"/><stop offset="1" stop-color="#2458d4"/></linearGradient></defs><path fill="url(#a1)" d="M0 0h100v100H0z"/><g stroke="#fff" stroke-width="8.500" stroke-linecap="round"><path d="M55 23L36 58M45 23l31 53M19 61h37M74 61h7M28 72l-3 4"/></g></svg>
  <!-- Settings -->
  <div class="relative size-[97px] shrink-0"><svg class="size-[97px] rounded-[22px] shadow-md" viewBox="0 0 100 100"><defs><linearGradient id="p1" x2="0" y2="1"><stop stop-color="#d8e4ec"/><stop offset="1" stop-color="#8d8b88"/></linearGradient></defs><path fill="url(#p1)" d="M0 0h100v100H0z"/><circle cx="50" cy="50" r="43" fill="#2a2b2d"/><circle cx="50" cy="50" r="37" fill="none" stroke="#a9adb1" stroke-width="5" stroke-dasharray="2 1.300"/><circle cx="50" cy="50" r="33" fill="none" stroke="#b4b8bc" stroke-width="4.500"/><circle cx="50" cy="50" r="22" fill="#5c5e61" stroke="#94979b" stroke-width="4" stroke-dasharray="1.500 1"/><circle cx="50" cy="50" r="18" fill="#47494c"/><path d="M50 50h32M50 50L34 22M50 50L34 78" stroke="#b4b8bc" stroke-width="4.500"/><circle cx="50" cy="50" r="4" fill="#303234"/></svg><span class="absolute -top-[11px] left-[65px] flex size-[45px] items-center justify-center rounded-full bg-[#ea5044] text-[25px] leading-none text-white shadow-md">2</span></div>
  <i class="ml-[14px] h-[110px] w-0.5 shrink-0 bg-[#44306a]"></i>
  <!-- Trash -->
  <svg class="-mt-[9px] ml-4 h-[112px] w-[86px] shrink-0 drop-shadow-md" viewBox="0 0 86 112"><defs><linearGradient id="b1" x2="1" y2="0"><stop stop-color="#e6e6e8"/><stop offset=".5" stop-color="#d4d3d5"/><stop offset="1" stop-color="#f0f0f2"/></linearGradient></defs><ellipse cx="43" cy="17" rx="42" ry="11" fill="#b6b0c2"/><path d="M4 14l14-12 8 3 8-4 6 10 8-9 12 7 12 0 6 10-20 10H18z" fill="#ececec"/><path d="M14 16l8-8 6 6-5 8zM46 20l6-13 10 4 6 10z" fill="#55585e"/><path d="M24 16l8-4 8 2-6 5z" fill="#49b8d8"/><path d="M28 17l6 0-2 4z" fill="#6cc94a"/><path d="M50 14l8-2 4 8-10 2z" fill="#3c62a8"/><path d="M40 16l3 8-5 3z" fill="#e0703a"/><path d="M1 18q8 8 42 9 34-1 42-9l-8 84q-1 9-34 9T10 102z" fill="url(#b1)"/><path d="M28 33q20 4 36-10-4 22-30 18z" fill="#f3f3f4"/></svg>
</footer>
</body>
</html>
